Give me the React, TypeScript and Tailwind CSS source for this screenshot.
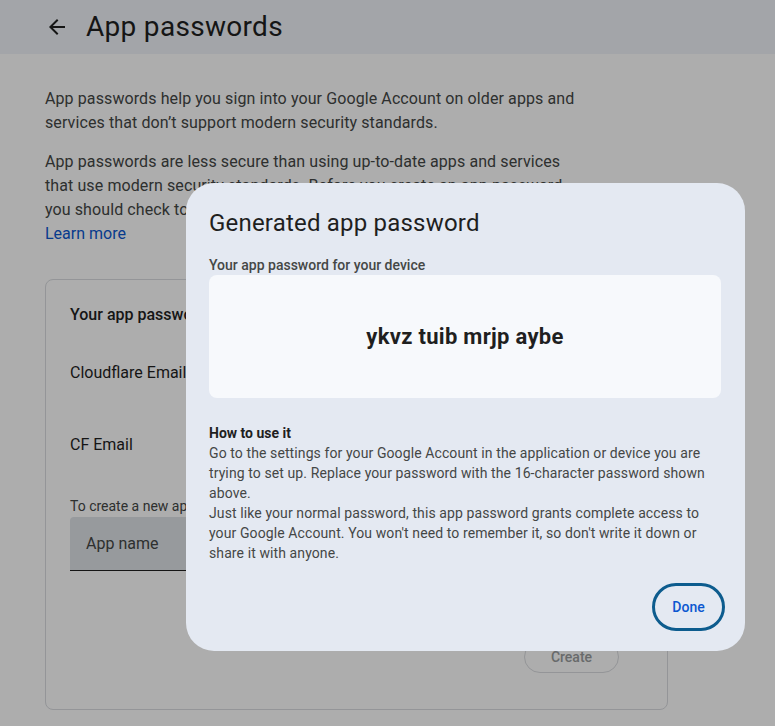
import React from "react";

const font = { fontFamily: "Roboto, 'Noto Sans', sans-serif" };

export default function App() {
  return (
    <div className="relative w-[775px] h-[726px] overflow-hidden bg-white text-[#1f1f1f]" style={font}>
      {/* Header */}
      <div className="h-[54px] bg-[#f0f4f9] flex items-center pl-[45px]">
        <svg width="24" height="24" viewBox="0 0 24 24" className="fill-[#1f1f1f]">
          <path d="M20 11H7.83l5.59-5.59L12 4l-8 8 8 8 1.41-1.41L7.83 13H20v-2z" />
        </svg>
        <h1 className="ml-[17px] text-[28px] leading-[36px] tracking-[0.3px] text-[#1f1f1f]">App passwords</h1>
      </div>

      {/* Body */}
      <div className="px-[45px] pt-[33px]">
        <p className="w-[540px] text-[16px] leading-[24px] tracking-[0.1px] text-[#444746]">
          App passwords help you sign into your Google Account on older apps and services that don’t support modern security standards.
        </p>
        <p className="mt-[15px] w-[540px] text-[16px] leading-[24px] tracking-[0.1px] text-[#444746]">
          App passwords are less secure than using up-to-date apps and services that use modern security standards. Before you create an app password, you should check to see if your app needs this in order to sign in.
        </p>
        <div className="text-[16px] leading-[24px] text-[#0b57d0]">Learn more</div>

        {/* Card */}
        <div className="mt-[33px] w-[623px] h-[431px] rounded-[8px] border border-[#dadce0] px-[24px] pt-[23px]">
          <div className="text-[16px] leading-[24px] font-medium text-[#1f1f1f]">Your app passwords</div>
          <div className="h-[72px] flex items-center justify-between mt-[10px] text-[16px] text-[#1f1f1f]">
            <span>Cloudflare Email</span>
          </div>
          <div className="h-[72px] flex items-center justify-between text-[16px] text-[#1f1f1f]">
            <span>CF Email</span>
          </div>
          <div className="mt-[15px] text-[14px] leading-[20px] text-[#444746]">
            To create a new app specific password, type a name for it below...
          </div>
          <div className="mt-[1px] h-[54px] w-[420px] rounded-t-[4px] bg-[#dfe3e8] border-b border-[#1f1f1f] flex items-center px-[16px] text-[16px] text-[#444746]">
            App name
          </div>
          <div className="flex justify-end pr-[24px] mt-[70px]">
            <div className="h-[32px] w-[95px] rounded-full border border-[#dadce0] flex items-center justify-center text-[14px] font-medium text-[#9a9c9e]">
              Create
            </div>
          </div>
        </div>
      </div>

      {/* Scrim */}
      <div className="absolute inset-0 bg-black/[0.32]" />

      {/* Dialog */}
      <div className="absolute left-[186px] top-[183px] w-[559px] h-[468px] rounded-[28px] bg-[#e4e9f2] pl-[23px] pr-[20px] pt-[24px]">
        <h2 className="text-[24px] leading-[32px] tracking-[0.2px] text-[#1f1f1f]">Generated app password</h2>
        <div className="mt-[16px] text-[14px] leading-[20px] font-medium text-[#444746]">Your app password for your device</div>
        <div className="w-[512px] h-[123px] rounded-[8px] bg-[#f7f9fc] flex items-center justify-center">
          <span className="text-[22px] font-bold tracking-[0.3px] text-[#1f1f1f]">ykvz tuib mrjp aybe</span>
        </div>
        <div className="mt-[25px] text-[14px] leading-[20px] font-bold text-[#1f1f1f]">How to use it</div>
        <div className="w-[512px] text-[14px] leading-[20px] tracking-[0.1px] text-[#444746]">
          <div>
            Go to the settings for your Google Account in the application or device you are trying to set up. Replace your password with the 16-character password shown above.
          </div>
          <div>
            Just like your normal password, this app password grants complete access to your Google Account. You won't need to remember it, so don't write it down or share it with anyone.
          </div>
        </div>
        <div className="flex justify-end mt-[20px]">
          <button className="h-[48px] w-[73px] rounded-full border-[3px] border-[#0d5c8e] text-[14px] font-medium text-[#0b57d0]">
            Done
          </button>
        </div>
      </div>
    </div>
  );
}
